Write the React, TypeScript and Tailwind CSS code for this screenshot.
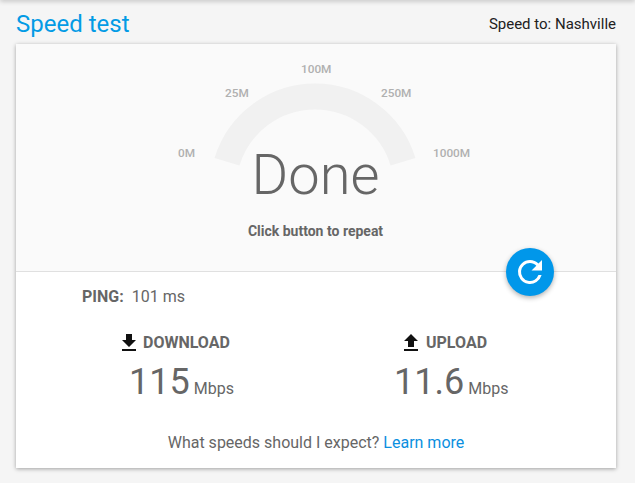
export default function App() {
  return (
    <div className="relative flex h-[483px] w-[635px] flex-col overflow-hidden bg-[#f5f5f5] pr-[19px] pl-4 font-['Roboto',sans-serif] text-[#666666]">
      <div className="pointer-events-none absolute inset-x-0 top-[-4px] h-1 shadow-[0_1px_5px_rgba(0,0,0,0.25)]" />
      <header className="flex h-[44px] shrink-0 items-center justify-between pt-1">
        <h1 className="text-[24px] leading-none font-normal text-[#039be5]">Speed test</h1>
        <span className="text-[15px] text-[#212121]">Speed to: Nashville</span>
      </header>
      <main className="flex h-[424px] flex-col bg-white shadow-[0_1px_4px_rgba(0,0,0,0.35)]">
        <section className="relative h-[228px] shrink-0 border-b border-[#e0e0e0] bg-[#fafafa]">
          <svg className="absolute top-0 left-[183px]" width="232" height="130" viewBox="0 0 232 130" aria-hidden="true">
            <path d="M 28 117.7 A 92 92 0 0 1 204 117.7" fill="none" stroke="#f1f1f1" strokeWidth="26" />
          </svg>
          <span className="absolute top-[17px] left-[285px] text-[11.8px] font-medium text-[#b0b0b0]">100M</span>
          <span className="absolute top-[41px] left-[209px] text-[11.8px] font-medium text-[#b0b0b0]">25M</span>
          <span className="absolute top-[41px] left-[365px] text-[11.8px] font-medium text-[#b0b0b0]">250M</span>
          <span className="absolute top-[101px] left-[162px] text-[11.8px] font-medium text-[#b0b0b0]">0M</span>
          <span className="absolute top-[101px] left-[417px] text-[11.8px] font-medium text-[#b0b0b0]">1000M</span>
          <div className="absolute inset-x-0 top-[96px] flex flex-col items-center pr-[1px]">
            <span className="text-[56px] leading-[70px] font-light text-[#666666]">Done</span>
            <span className="mt-[11px] text-[14px] leading-[20px] font-bold text-[#666666]">Click button to repeat</span>
          </div>
          <button className="absolute right-[62px] bottom-[-25px] z-10 flex h-[48px] w-[48px] items-center justify-center rounded-full bg-[#0097ea] shadow-[0_2px_5px_rgba(0,0,0,0.3)]">
            <svg width="36" height="36" viewBox="0 0 24 24" fill="none" aria-hidden="true">
              <path d="M17.65 6.35A7.96 7.96 0 0 0 12 4a8 8 0 1 0 7.73 10h-2.08A6 6 0 1 1 12 6c1.66 0 3.14.69 4.22 1.78L13 11h7V4l-2.35 2.35z" fill="#ffffff" />
            </svg>
          </button>
        </section>
        <section className="flex flex-1 flex-col">
          <div className="flex h-[50px] items-center pl-[66px]">
            <span className="text-[16px] font-bold text-[#666666]">PING:</span>
            <span className="ml-2 text-[16px] text-[#666666]">101 ms</span>
          </div>
          <div className="mt-[9px] flex pl-[101px]">
            <div className="flex w-[277px] flex-col items-start">
              <div className="flex h-[24px] items-center">
                <svg width="24" height="24" viewBox="0 0 24 24" className="mr-[2px]" aria-hidden="true">
                  <path d="M19 9h-4V3H9v6H5l7 7 7-7zM5 18v2h14v-2H5z" fill="#111111" />
                </svg>
                <span className="text-[16px] font-bold text-[#666666]">DOWNLOAD</span>
              </div>
              <div className="mt-[1px] ml-[12px] flex items-baseline">
                <span className="text-[36px] leading-[52px] text-[#666666]">115</span>
                <span className="ml-[4px] text-[16px] text-[#666666]">Mbps</span>
              </div>
            </div>
            <div className="flex flex-col items-start">
              <div className="ml-[5px] flex h-[24px] items-center">
                <svg width="24" height="24" viewBox="0 0 24 24" className="mr-[3px]" aria-hidden="true">
                  <path d="M9 16h6v-6h4l-7-7-7 7h4zm-4 2h14v2H5z" fill="#111111" />
                </svg>
                <span className="text-[16px] font-bold text-[#666666]">UPLOAD</span>
              </div>
              <div className="mt-[1px] flex items-baseline">
                <span className="text-[36px] leading-[52px] text-[#666666]">11.6</span>
                <span className="ml-[4px] text-[16px] text-[#666666]">Mbps</span>
              </div>
            </div>
          </div>
          <p className="mt-[23px] text-center text-[16px] leading-[24px] text-[#666666]">
            What speeds should I expect? <a className="text-[#0b8fe0]">Learn more</a>
          </p>
        </section>
      </main>
    </div>
  );
}
